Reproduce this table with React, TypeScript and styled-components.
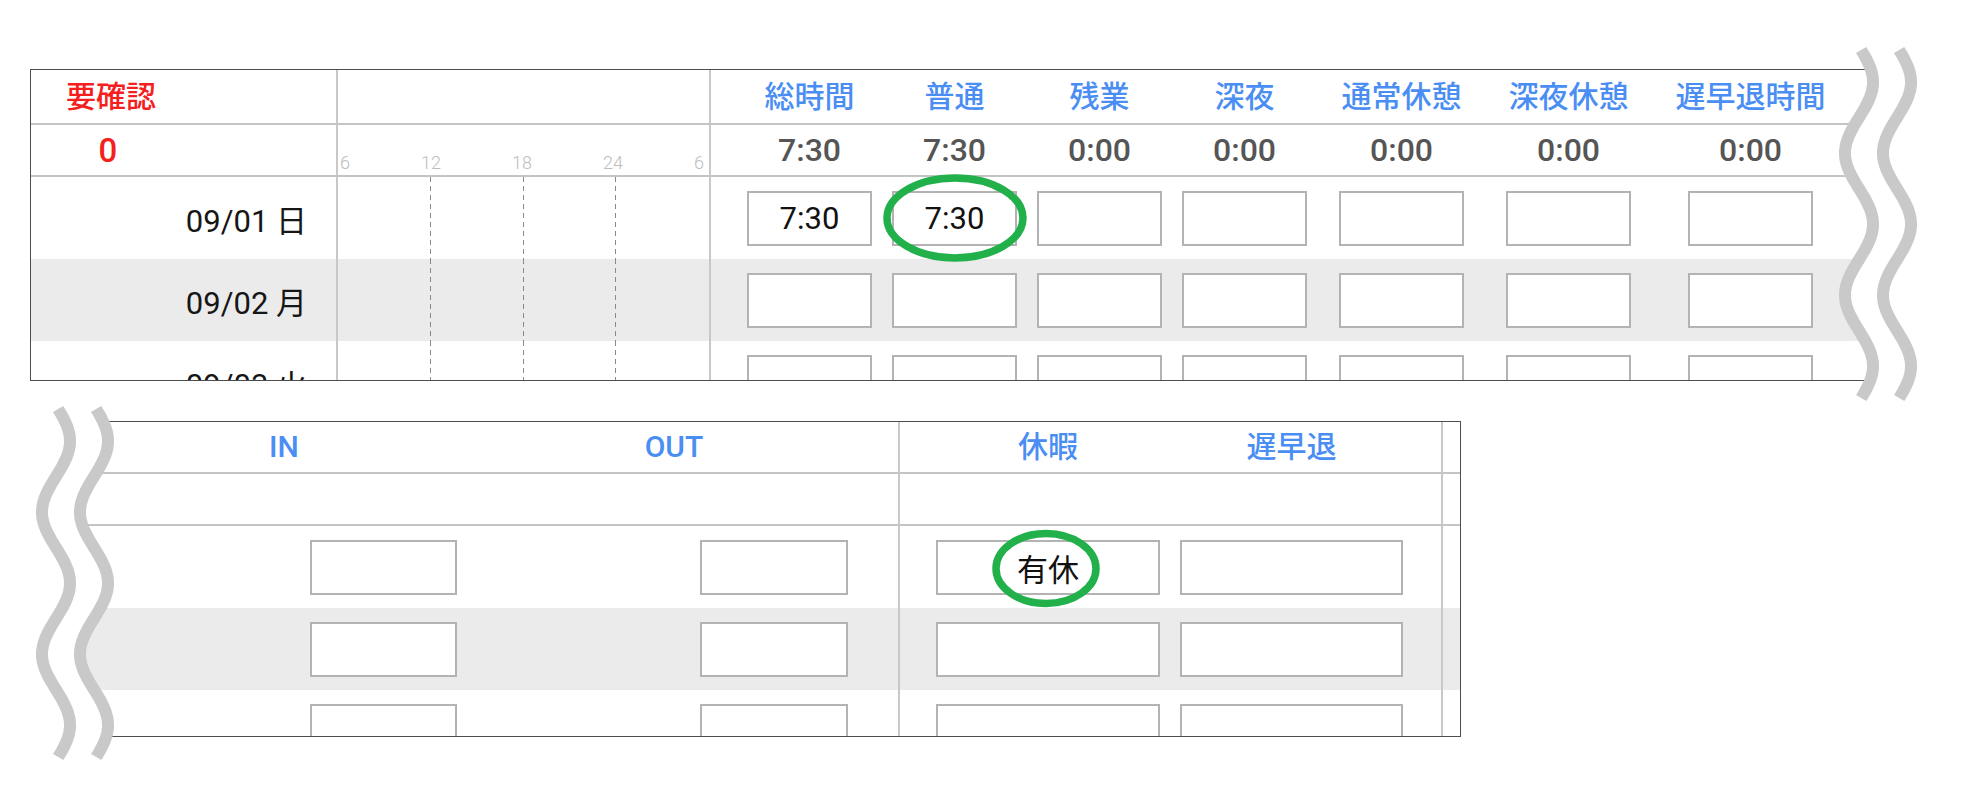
import React from 'react'
import styled, { createGlobalStyle } from 'styled-components'

const BLUE = '#4a8ef4'
const RED = '#f5201e'
const RULE = '#c4c4c4'
const EDGE = '#4d4d4d'
const STRIPE = '#ebebeb'
const WAVE = '#c9c9c9'

const GlobalStyle = createGlobalStyle`
  html, body {
    margin: 0;
    padding: 0;
    background: #ffffff;
  }
  body {
    font-family: Roboto, 'Noto Sans CJK JP', sans-serif;
    color: #111111;
  }
`

const columns = ['総時間', '普通', '残業', '深夜', '通常休憩', '深夜休憩', '遅早退時間']
const columnWidths = [145, 145, 145, 145, 169, 165, 199]
const totals = ['7:30', '7:30', '0:00', '0:00', '0:00', '0:00', '0:00']

const days = [
  { date: '09/01 日', values: ['7:30', '7:30', '', '', '', '', ''] },
  { date: '09/02 月', values: ['', '', '', '', '', '', ''] },
  { date: '09/03 火', values: ['', '', '', '', '', '', ''] },
]

const leaves = [
  { kind: '有休', late: '' },
  { kind: '', late: '' },
  { kind: '', late: '' },
]

const scale = ['6', '12', '18', '24', '6']

// wave drawn as a polyline; same period for both breaks
const wavePoints = (cx: number, top: number, length: number, amp: number) => {
  const pts: string[] = []
  for (let t = 0; t <= length; t += 2) {
    const x = cx + amp * Math.sin((2 * Math.PI * t) / 142 + 0.15)
    pts.push(`${x.toFixed(1)},${(top + t).toFixed(1)}`)
  }
  return pts
}

type BreakProps = {
  side: 'left' | 'right'
  length: number
  x: number
  y: number
}

const BreakMark: React.FC<BreakProps> = ({ side, length, x, y }) => {
  const first = wavePoints(side === 'right' ? 29 : 36, 10, length, 14)
  const second = wavePoints(side === 'right' ? 67 : 74, 10, length, 14)
  const edge = side === 'right' ? first : second
  const fillX = side === 'right' ? 100 : 0
  const cover = [...edge, `${fillX},${10 + length}`, `${fillX},10`].join(' ')
  return (
    <WaveLayer $x={x} $y={y} width={100} height={length + 20} viewBox={`0 0 100 ${length + 20}`}>
      <polygon points={cover} fill="#ffffff" />
      <polyline points={first.join(' ')} fill="none" stroke={WAVE} strokeWidth={12} />
      <polyline points={second.join(' ')} fill="none" stroke={WAVE} strokeWidth={12} />
    </WaveLayer>
  )
}

type RingProps = { rx: number; ry: number; dx?: number; dy?: number }

const RingMark: React.FC<RingProps> = ({ rx, ry, dx = 0, dy = 0 }) => {
  const w = rx * 2 + 12
  const h = ry * 2 + 12
  return (
    <Ring $dx={dx} $dy={dy} width={w} height={h} viewBox={`0 0 ${w} ${h}`}>
      <ellipse cx={w / 2} cy={h / 2} rx={rx} ry={ry} fill="none" stroke="#22b04b" strokeWidth={7.5} />
    </Ring>
  )
}

const App: React.FC = () => {
  return (
    <>
      <GlobalStyle />
      <Page>
        <Panel $left={30}>
          <Sheet $width={1840} $height={312}>
            <TopRow $height={53} $rule>
              <FlagCell>
                <Flag>要確認</Flag>
              </FlagCell>
              <TimeCell />
              <FigureCell>
                {columns.map((c) => (
                  <HeadLabel key={c}>{c}</HeadLabel>
                ))}
              </FigureCell>
            </TopRow>
            <TopRow $height={50} $rule>
              <FlagCell>
                <Flag $big>0</Flag>
              </FlagCell>
              <TimeCell>
                <Scale>
                  {scale.map((s, i) => (
                    <span key={i}>{s}</span>
                  ))}
                </Scale>
              </TimeCell>
              <FigureCell>
                {totals.map((t, i) => (
                  <Total key={i}>{t}</Total>
                ))}
              </FigureCell>
            </TopRow>
            {days.map((d, r) => (
              <TopRow key={d.date} $height={82} $striped={r % 2 === 1}>
                <DayCell>{d.date}</DayCell>
                <TimeCell>
                  <Ticks>
                    <Tick $dashed />
                    <Tick $dashed />
                    <Tick $dashed />
                    <Tick />
                  </Ticks>
                </TimeCell>
                <FigureCell>
                  {d.values.map((v, i) => (
                    <Field key={i} $width={125}>
                      {v}
                      {r === 0 && i === 1 && <RingMark rx={68} ry={40} />}
                    </Field>
                  ))}
                </FigureCell>
              </TopRow>
            ))}
          </Sheet>
          <BreakMark side="right" length={348} x={1800} y={-29} />
        </Panel>

        <Panel $left={0}>
          <Sheet $width={1401} $height={316} $offset={60}>
            <BottomRow $height={50} $rule>
              <PunchCell $padLeft={27} $padRight={23} $center>
                <HeadLabel>IN</HeadLabel>
              </PunchCell>
              <PunchCell $padRight={20} $center>
                <HeadLabel>OUT</HeadLabel>
              </PunchCell>
              <div />
              <LeaveCell>
                <HeadLabel>休暇</HeadLabel>
                <HeadLabel>遅早退</HeadLabel>
              </LeaveCell>
              <EndCell />
            </BottomRow>
            <BottomRow $height={50} $rule>
              <div />
              <div />
              <div />
              <LeaveCell />
              <EndCell />
            </BottomRow>
            {leaves.map((l, r) => (
              <BottomRow key={r} $height={82} $striped={r % 2 === 1}>
                <PunchCell $padLeft={27} $padRight={23}>
                  <Field $width={147} />
                </PunchCell>
                <PunchCell $padRight={20}>
                  <Field $width={148} />
                </PunchCell>
                <div />
                <LeaveCell>
                  <Field $width={224}>
                    {l.kind}
                    {r === 0 && <RingMark rx={50} ry={35} dx={-2} dy={1.5} />}
                  </Field>
                  <Field $width={223}>{l.late}</Field>
                </LeaveCell>
                <EndCell />
              </BottomRow>
            ))}
          </Sheet>
          <BreakMark side="left" length={349} x={20} y={-22} />
        </Panel>
      </Page>
    </>
  )
}

const Page = styled.div`
  width: 1968px;
  height: 804px;
  box-sizing: border-box;
  padding-top: 69px;
  display: flex;
  flex-direction: column;
  gap: 40px;
  overflow: hidden;
`

const Panel = styled.section<{ $left: number }>`
  position: relative;
  margin-left: ${(p) => p.$left}px;
`

const Sheet = styled.div<{ $width: number; $height: number; $offset?: number }>`
  width: ${(p) => p.$width}px;
  height: ${(p) => p.$height}px;
  margin-left: ${(p) => p.$offset || 0}px;
  box-sizing: border-box;
  border: 1px solid ${EDGE};
  overflow: hidden;
  background: #ffffff;
`

const WaveLayer = styled.svg<{ $x: number; $y: number }>`
  position: absolute;
  left: ${(p) => p.$x}px;
  top: ${(p) => p.$y}px;
  overflow: visible;
`

const TopRow = styled.div<{ $height: number; $striped?: boolean; $rule?: boolean }>`
  display: grid;
  grid-template-columns: 305px 373px 1fr;
  height: ${(p) => p.$height}px;
  background: ${(p) => (p.$striped ? STRIPE : 'transparent')};
  border-bottom: ${(p) => (p.$rule ? `2px solid ${RULE}` : 'none')};
`

const BottomRow = styled.div<{ $height: number; $striped?: boolean; $rule?: boolean }>`
  display: grid;
  grid-template-columns: 419px 388px 30px 543px 19px;
  height: ${(p) => p.$height}px;
  background: ${(p) => (p.$striped ? STRIPE : 'transparent')};
  border-bottom: ${(p) => (p.$rule ? `2px solid ${RULE}` : 'none')};
`

const FlagCell = styled.div`
  display: flex;
  align-items: center;
`

const Flag = styled.div<{ $big?: boolean }>`
  width: 84px;
  margin-left: 35px;
  text-align: center;
  white-space: nowrap;
  color: ${RED};
  font-size: ${(p) => (p.$big ? 33 : 30)}px;
  font-weight: 500;
  line-height: 1;
`

const DayCell = styled.div`
  display: flex;
  align-items: center;
  justify-content: flex-end;
  padding-right: 29px;
  font-size: 31px;
  color: #161616;
`

const TimeCell = styled.div`
  border-left: 2px solid #c8c8c8;
  display: flex;
  align-items: stretch;
`

const Scale = styled.div`
  flex: 1;
  display: flex;
  justify-content: space-between;
  align-items: flex-end;
  padding: 0 5px 3px 2px;
  font-size: 18px;
  font-weight: 300;
  line-height: 1;
  color: #bdbdbd;
`

const Ticks = styled.div`
  flex: 1;
  display: flex;
`

const Tick = styled.div<{ $dashed?: boolean }>`
  flex: 1;
  background-image: ${(p) =>
    p.$dashed ? 'linear-gradient(to bottom, #8a8a8a 5px, transparent 5px)' : 'none'};
  background-size: 1px 9px;
  background-repeat: repeat-y;
  background-position: right top;
`

const FigureCell = styled.div`
  border-left: 2px solid #c8c8c8;
  padding-left: 26px;
  display: grid;
  grid-template-columns: ${columnWidths.map((w) => `${w}px`).join(' ')};
  align-items: center;
  justify-items: center;
`

const HeadLabel = styled.div`
  color: ${BLUE};
  font-size: 30px;
  font-weight: 500;
  line-height: 1;
  white-space: nowrap;
`

const Total = styled.div`
  color: #555555;
  font-size: 32px;
  font-weight: 500;
  line-height: 1;
`

const Field = styled.div<{ $width: number }>`
  position: relative;
  width: ${(p) => p.$width}px;
  height: 55px;
  box-sizing: border-box;
  border: 2px solid #b3b3b3;
  background: #ffffff;
  display: flex;
  align-items: center;
  justify-content: center;
  font-size: 31px;
  color: #111111;
`

const Ring = styled.svg<{ $dx: number; $dy: number }>`
  position: absolute;
  left: 50%;
  top: 50%;
  transform: translate(calc(-50% + ${(p) => p.$dx}px), calc(-50% + ${(p) => p.$dy}px));
  pointer-events: none;
`

const PunchCell = styled.div<{ $padLeft?: number; $padRight: number; $center?: boolean }>`
  display: flex;
  align-items: center;
  justify-content: ${(p) => (p.$center ? 'center' : 'flex-end')};
  padding-left: ${(p) => p.$padLeft || 0}px;
  padding-right: ${(p) => (p.$center ? 0 : p.$padRight)}px;
`

const LeaveCell = styled.div`
  border-left: 2px solid #c8c8c8;
  padding: 0 28px 0 26px;
  display: grid;
  grid-template-columns: 244px 243px;
  align-items: center;
  justify-items: center;
`

const EndCell = styled.div`
  border-left: 2px solid #c8c8c8;
`

export default App
